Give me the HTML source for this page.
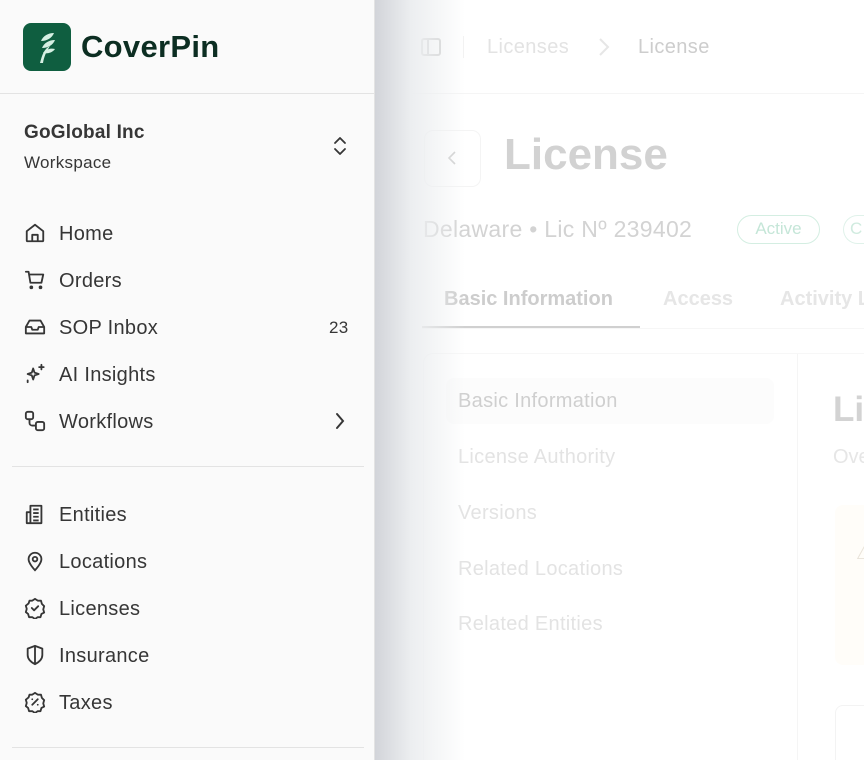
<!DOCTYPE html>
<html><head><meta charset="utf-8"><style>
*{margin:0;padding:0;box-sizing:border-box}
html,body{width:864px;height:760px;overflow:hidden}
body{background:#fff;font-family:"Liberation Sans",sans-serif;position:relative}
.sb{position:absolute;left:0;top:0;width:375px;height:760px;background:#fafafa;border-right:1px solid #e3e3e3}
.abs{position:absolute;white-space:nowrap}
.nav{position:absolute;left:0;width:375px;height:30px}
.nav svg{position:absolute;left:24px;top:4px}
.nav span{position:absolute;left:59px;top:5px;font-size:20px;color:#363636;letter-spacing:0.3px}
.hr{position:absolute;left:12px;width:352px;height:1px;background:#e3e3e3}
.shadow{position:absolute;left:375px;top:0;width:90px;height:760px;background:linear-gradient(to right,#d2d4d9,#eceef0 40%,rgba(255,255,255,0))}
</style></head><body>
<div class="abs" style="left:375px;top:93px;width:489px;height:1px;background:#f5f5f5"></div>
<svg class="abs" style="left:420px;top:36px" width="22" height="22" viewBox="0 0 22 22" fill="none" stroke="#cfcfcf" stroke-width="2"><rect x="2" y="3" width="18" height="16" rx="2"/><path d="M8 3v16"/></svg>
<div class="abs" style="left:463px;top:36px;width:1px;height:22px;background:#f2f2f2"></div>
<div class="abs" style="left:487px;top:36px;font-size:20px;color:#e3e3e3;letter-spacing:0.4px">Licenses</div>
<svg class="abs" style="left:596px;top:36px" width="16" height="22" viewBox="0 0 16 22" fill="none" stroke="#e6e6e6" stroke-width="2"><path d="M4 3l8 8-8 8"/></svg>
<div class="abs" style="left:638px;top:36px;font-size:20px;color:#cdcdcd;letter-spacing:0.4px">License</div>
<div class="abs" style="left:424px;top:130px;width:57px;height:57px;border:1px solid #f4f4f4;border-radius:9px"></div>
<svg class="abs" style="left:445px;top:150px" width="14" height="16" viewBox="0 0 14 16" fill="none" stroke="#cfcfcf" stroke-width="1.6"><path d="M10 2L4 8l6 6"/></svg>
<div class="abs" style="left:504px;top:130px;font-size:44px;font-weight:bold;color:#d2d2d2">License</div>
<div class="abs" style="left:423px;top:216px;font-size:23px;color:#d3d3d3;letter-spacing:0.3px">Delaware • Lic Nº 239402</div>
<div class="abs" style="left:737px;top:215px;width:83px;height:29px;border:1.5px solid #d4eee2;border-radius:15px;font-size:17px;color:#c5e6d8;text-align:center;line-height:26px">Active</div>
<div class="abs" style="left:843px;top:215px;width:21px;height:29px;border:1.5px solid #e0f2ea;border-right:none;border-radius:15px 0 0 15px;font-size:17px;color:#d0ebdf;line-height:26px;padding-left:6px;overflow:hidden">C</div>
<div class="abs" style="left:444px;top:288px;font-size:20px;font-weight:bold;color:#cdcdcd">Basic Information</div>
<div class="abs" style="left:663px;top:288px;font-size:20px;font-weight:bold;color:#e6e6e6">Access</div>
<div class="abs" style="left:780px;top:288px;font-size:20px;font-weight:bold;color:#e6e6e6">Activity L</div>
<div class="abs" style="left:422px;top:328px;width:442px;height:1px;background:#f6f6f6"></div>
<div class="abs" style="left:422px;top:326px;width:218px;height:2px;background:#d0d0d0"></div>
<div class="abs" style="left:423px;top:353px;width:441px;height:407px;border:1px solid #f7f7f7;border-right:none;border-bottom:none;border-radius:10px 0 0 0"></div>
<div class="abs" style="left:797px;top:354px;width:1px;height:406px;background:#f5f5f5"></div>
<div class="abs" style="left:446px;top:378px;width:328px;height:46px;background:#fcfcfc;border-radius:8px"></div>
<div class="abs" style="left:458px;top:390px;font-size:20px;color:#cfcfcf;letter-spacing:0.3px">Basic Information</div>
<div class="abs" style="left:458px;top:446px;font-size:20px;color:#e3e3e3;letter-spacing:0.3px">License Authority</div>
<div class="abs" style="left:458px;top:502px;font-size:20px;color:#e3e3e3;letter-spacing:0.3px">Versions</div>
<div class="abs" style="left:458px;top:558px;font-size:20px;color:#e3e3e3;letter-spacing:0.3px">Related Locations</div>
<div class="abs" style="left:458px;top:613px;font-size:20px;color:#e3e3e3;letter-spacing:0.3px">Related Entities</div>
<div class="abs" style="left:833px;top:390px;font-size:35px;font-weight:bold;color:#d3d3d3">Li</div>
<div class="abs" style="left:833px;top:446px;font-size:20px;color:#e6e6e6">Ove</div>
<div class="abs" style="left:835px;top:505px;width:29px;height:160px;background:#fffdf9;border-radius:8px 0 0 8px"></div>
<div class="abs" style="left:856px;top:540px;font-size:20px;color:#e8e2d8;width:8px;overflow:hidden">⚠</div>
<div class="abs" style="left:835px;top:705px;width:29px;height:55px;border:1px solid #f3f3f3;border-right:none;border-bottom:none;border-radius:8px 0 0 0"></div>
<div class="shadow"></div>
<div class="sb">
<svg class="abs" style="left:23px;top:23px" width="48" height="48" viewBox="0 0 48 48"><rect width="48" height="48" rx="8" fill="#0f5e40"/><path d="M17 40c2-8 4-14 10-17-4 6-6 11-7 17z" fill="#d6f0e3"/><path d="M19 25c2-5 7-8 13-8-2 5-7 8-13 8z" fill="#d6f0e3"/><path d="M18 18c2-5 7-8 13-8-2 5-7 8-13 8z" fill="#d6f0e3"/><path d="M20 30c3-4 8-5 12-4-3 4-8 5-12 4z" fill="#d6f0e3"/></svg>
<div class="abs" style="left:81px;top:29px;font-size:31px;font-weight:bold;color:#0c2e22;letter-spacing:0.3px">CoverPin</div>
<div class="abs" style="left:0;top:93px;width:375px;height:1px;background:#e3e3e3"></div>
<div class="abs" style="left:24px;top:122px;font-size:19px;font-weight:bold;color:#363636;letter-spacing:0.2px">GoGlobal Inc</div>
<div class="abs" style="left:24px;top:153px;font-size:17px;color:#363636;letter-spacing:0.3px">Workspace</div>
<svg class="abs" style="left:332px;top:136px" width="16" height="20" viewBox="0 0 16 20" fill="none" stroke="#363636" stroke-width="1.8" stroke-linecap="round" stroke-linejoin="round"><path d="M3 7l5-5 5 5M3 13l5 5 5-5"/></svg>
<div class="nav" style="top:218px"><svg width="22" height="22" viewBox="0 0 24 24" fill="none" stroke="#363636" stroke-width="2" stroke-linejoin="round"><path d="M3 10l9-7 9 7v10a1 1 0 0 1-1 1H4a1 1 0 0 1-1-1z"/><path d="M9 21v-7h6v7"/></svg><span>Home</span></div>
<div class="nav" style="top:265px"><svg width="22" height="22" viewBox="0 0 24 24" fill="none" stroke="#363636" stroke-width="2" stroke-linecap="round" stroke-linejoin="round"><path d="M2 3h3l2 12h12l2-9H6"/><circle cx="8" cy="20" r="1"/><circle cx="18" cy="20" r="1"/></svg><span>Orders</span></div>
<div class="nav" style="top:312px"><svg width="22" height="22" viewBox="0 0 24 24" fill="none" stroke="#363636" stroke-width="2" stroke-linejoin="round"><path d="M2 12l4-7h12l4 7v7H2z"/><path d="M2 12h6l1 3h6l1-3h6"/></svg><span>SOP Inbox</span><span style="left:329px;font-size:17px;top:6px">23</span></div>
<div class="nav" style="top:359px"><svg width="22" height="22" viewBox="0 0 24 24" fill="none" stroke="#363636" stroke-width="2" stroke-linejoin="round" stroke-linecap="round"><path d="M10 6l1.5 4.5L16 12l-4.5 1.5L10 18l-1.5-4.5L4 12l4.5-1.5z"/><path d="M19 2v5M16.5 4.5h5M4 19v2"/></svg><span>AI Insights</span></div>
<div class="nav" style="top:406px"><svg width="22" height="22" viewBox="0 0 24 24" fill="none" stroke="#363636" stroke-width="2"><rect x="2" y="2" width="8" height="8" rx="2"/><rect x="13" y="13" width="9" height="9" rx="2"/><path d="M6 10v4a3 3 0 0 0 3 3h4"/></svg><span>Workflows</span><svg style="left:332px;top:5px" width="16" height="20" viewBox="0 0 16 20" fill="none" stroke="#363636" stroke-width="2" stroke-linecap="round"><path d="M5 3l6 7-6 7"/></svg></div>
<div class="hr" style="top:466px"></div>
<div class="nav" style="top:499px"><svg width="22" height="22" viewBox="0 0 24 24" fill="none" stroke="#363636" stroke-width="2" stroke-linejoin="round"><path d="M7 22V3h12v19zM7 10H3v12h4M10 7h6M10 11h6M10 15h6M10 19h6"/></svg><span>Entities</span></div>
<div class="nav" style="top:546px"><svg width="22" height="22" viewBox="0 0 24 24" fill="none" stroke="#363636" stroke-width="2"><path d="M12 22s-7-7-7-12a7 7 0 0 1 14 0c0 5-7 12-7 12z"/><circle cx="12" cy="10" r="2.5"/></svg><span>Locations</span></div>
<div class="nav" style="top:593px"><svg width="22" height="22" viewBox="0 0 24 24" fill="none" stroke="#363636" stroke-width="2" stroke-linejoin="round" stroke-linecap="round"><path d="M12 2l3 2h3.5l1 3.5 2.5 2.5-1 3.5 1 3.5-3 1.5-1 3.5H15l-3 2-3-2H5.5l-1-3.5-2.5-2 1-3.5-1-3.5L5 7l1-3h3z"/><path d="M8.5 12l2.5 2.5 4.5-4.5"/></svg><span>Licenses</span></div>
<div class="nav" style="top:640px"><svg width="22" height="22" viewBox="0 0 24 24" fill="none" stroke="#363636" stroke-width="2" stroke-linejoin="round"><path d="M12 2l8 3v7c0 5-4 8-8 10-4-2-8-5-8-10V5z"/><path d="M12 2v20"/></svg><span>Insurance</span></div>
<div class="nav" style="top:687px"><svg width="22" height="22" viewBox="0 0 24 24" fill="none" stroke="#363636" stroke-width="2" stroke-linejoin="round" stroke-linecap="round"><path d="M12 2l3 2h3.5l1 3.5 2.5 2.5-1 3.5 1 3.5-3 1.5-1 3.5H15l-3 2-3-2H5.5l-1-3.5-2.5-2 1-3.5-1-3.5L5 7l1-3h3z"/><path d="M9 15l6-6M9 9h.01M15 15h.01"/></svg><span>Taxes</span></div>
<div class="hr" style="top:747px"></div>
</div>
</body></html>
